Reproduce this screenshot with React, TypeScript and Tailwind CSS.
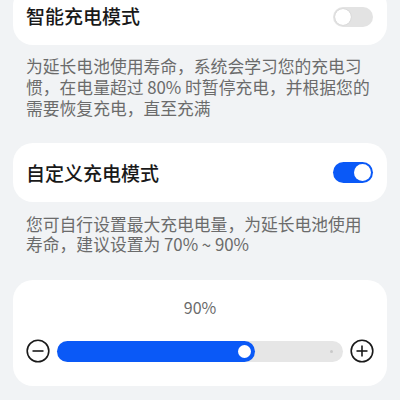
export default function App() {
  const font = { fontFamily: '"Noto Sans CJK SC", "Noto Sans", sans-serif' };

  return (
    <div
      className="w-[400px] h-[400px] overflow-hidden bg-[#f1f3f5] px-[13px]"
      style={font}
    >
      {/* Smart charging card (top is cut off) */}
      <div className="-mt-[14px] h-[59px] rounded-[20px] bg-white flex items-center justify-between pl-[13px] pr-[14px]">
        <span className="text-[19px] font-medium text-[#191919] leading-none">
          智能充电模式
        </span>
        <div className="w-[40px] h-[20px] rounded-full bg-[#e3e3e3] p-[2px] flex items-center mt-[3px]">
          <div className="w-[16px] h-[16px] rounded-full bg-white shadow-[0_0_1px_rgba(0,0,0,0.25)]" />
        </div>
      </div>

      <div className="pl-[13px] pt-[11px] text-[16.8px] leading-[21px] text-[#6b6b6b] whitespace-nowrap">
        <div>为延长电池使用寿命，系统会学习您的充电习</div>
        <div>惯，在电量超过 80% 时暂停充电，并根据您的</div>
        <div>需要恢复充电，直至充满</div>
      </div>

      {/* Custom charging card */}
      <div className="mt-[24px] h-[59px] rounded-[20px] bg-white flex items-center justify-between pl-[13px] pr-[14px]">
        <span className="text-[19px] font-medium text-[#191919] leading-none">
          自定义充电模式
        </span>
        <div className="w-[40px] h-[21px] rounded-full bg-[#0a59f7] p-[2px] flex items-center justify-end">
          <div className="w-[17px] h-[17px] rounded-full bg-white" />
        </div>
      </div>

      <div className="pl-[13px] pt-[12px] text-[16.8px] leading-[20px] text-[#6b6b6b] whitespace-nowrap">
        <div>您可自行设置最大充电电量，为延长电池使用</div>
        <div>寿命，建议设置为 70% ~ 90%</div>
      </div>

      {/* Slider card */}
      <div className="mt-[26px] h-[106px] rounded-[20px] bg-white flex flex-col items-center pt-[17px] px-[13px]">
        <div className="text-[16px] leading-[20px] text-[#6b6b6b]">90%</div>
        <div className="mt-[22px] w-full flex items-center gap-[7px]">
          <svg width="24" height="24" viewBox="0 0 24 24" fill="none">
            <circle cx="12" cy="12" r="10.8" stroke="#1a1a1a" strokeWidth="1.6" />
            <line x1="6.5" y1="12" x2="17.5" y2="12" stroke="#1a1a1a" strokeWidth="1.6" />
          </svg>
          <div className="relative flex-1 h-[21px] rounded-full bg-[#e6e6e6]">
            <div className="absolute left-0 top-0 h-full w-[198px] rounded-full bg-[#0a59f7]" />
            <div className="absolute left-[181px] top-[4px] w-[13px] h-[13px] rounded-full bg-white" />
            <div className="absolute right-[10px] top-[9px] w-[3px] h-[3px] rounded-full bg-[#c8c8c8]" />
          </div>
          <svg width="24" height="24" viewBox="0 0 24 24" fill="none">
            <circle cx="12" cy="12" r="10.8" stroke="#1a1a1a" strokeWidth="1.6" />
            <line x1="6.5" y1="12" x2="17.5" y2="12" stroke="#1a1a1a" strokeWidth="1.6" />
            <line x1="12" y1="6.5" x2="12" y2="17.5" stroke="#1a1a1a" strokeWidth="1.6" />
          </svg>
        </div>
      </div>
    </div>
  );
}
